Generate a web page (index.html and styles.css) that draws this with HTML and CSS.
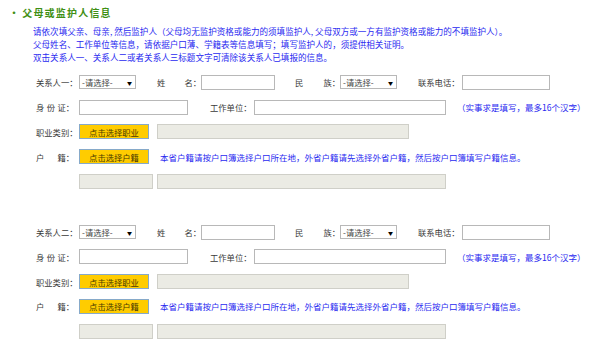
FILE: index.html
```html
<!DOCTYPE html>
<html lang="zh-CN">
<head>
    <meta charset="UTF-8">
    <title>父母或监护人信息</title>
    <link rel="stylesheet" href="styles.css">
</head>
<body>
    <div class="title"><span class="dot">·</span>父母或监护人信息</div>
    <div class="notes">
        <p>请依次填父亲、母亲, 然后监护人（父母均无监护资格或能力的须填监护人, 父母双方或一方有监护资格或能力的不填监护人）。</p>
        <p>父母姓名、工作单位等信息，请依据户口薄、学籍表等信息填写；填写监护人的，须提供相关证明。</p>
        <p>双击关系人一、关系人二或者关系人三标题文字可清除该关系人已填报的信息。</p>
    </div>

    <!-- 关系人一 -->
    <div class="group">
        <div class="row">
            <label class="lbl">关系人一：</label>
            <div class="select"><span>-请选择-</span><i>▼</i></div>
            <label class="lbl sp w-name"><span>姓</span><span>名：</span></label>
            <input type="text" class="inp w-74">
            <label class="lbl sp w-nation"><span>民</span><span>族：</span></label>
            <div class="select"><span>-请选择-</span><i>▼</i></div>
            <label class="lbl w-tel">联系电话：</label>
            <input type="text" class="inp w-88">
        </div>
        <div class="row">
            <label class="lbl sp w-id"><span>身</span><span>份</span><span>证：</span></label>
            <input type="text" class="inp w-109">
            <label class="lbl w-work">工作单位：</label>
            <input type="text" class="inp w-192">
            <span class="tip">（实事求是填写，最多16个汉字）</span>
        </div>
        <div class="row">
            <label class="lbl">职业类别：</label>
            <button class="pick">点击选择职业</button>
            <input type="text" class="inp gray w-252 ml-8" readonly>
        </div>
        <div class="row">
            <label class="lbl sp w-id"><span>户</span><span>籍：</span></label>
            <button class="pick">点击选择户籍</button>
            <span class="tip ml-11">本省户籍请按户口簿选择户口所在地，外省户籍请先选择外省户籍，然后按户口簿填写户籍信息。</span>
        </div>
        <div class="row indent">
            <input type="text" class="inp gray w-74" readonly>
            <input type="text" class="inp gray w-289" readonly>
        </div>
    </div>

    <!-- 关系人二 -->
    <div class="group">
        <div class="row">
            <label class="lbl">关系人二：</label>
            <div class="select"><span>-请选择-</span><i>▼</i></div>
            <label class="lbl sp w-name"><span>姓</span><span>名：</span></label>
            <input type="text" class="inp w-74">
            <label class="lbl sp w-nation"><span>民</span><span>族：</span></label>
            <div class="select"><span>-请选择-</span><i>▼</i></div>
            <label class="lbl w-tel">联系电话：</label>
            <input type="text" class="inp w-88">
        </div>
        <div class="row">
            <label class="lbl sp w-id"><span>身</span><span>份</span><span>证：</span></label>
            <input type="text" class="inp w-109">
            <label class="lbl w-work">工作单位：</label>
            <input type="text" class="inp w-192">
            <span class="tip">（实事求是填写，最多16个汉字）</span>
        </div>
        <div class="row">
            <label class="lbl">职业类别：</label>
            <button class="pick">点击选择职业</button>
            <input type="text" class="inp gray w-252 ml-8" readonly>
        </div>
        <div class="row">
            <label class="lbl sp w-id"><span>户</span><span>籍：</span></label>
            <button class="pick">点击选择户籍</button>
            <span class="tip ml-11">本省户籍请按户口簿选择户口所在地，外省户籍请先选择外省户籍，然后按户口簿填写户籍信息。</span>
        </div>
        <div class="row indent">
            <input type="text" class="inp gray w-74" readonly>
            <input type="text" class="inp gray w-289" readonly>
        </div>
    </div>
</body>
</html>
```

FILE: styles.css
```css
:root {
    --label-color: #3a3a3a;
    --note-color: #2a2af0;
    --title-color: #3f8f14;
    --border-color: #b8b8b8;
    --gray-fill: #ebebe4;
    --font-family: "Noto Sans CJK SC", "Noto Sans", sans-serif;
}

body {
    margin: 0;
    padding: 0;
    background: #fff;
    font-family: var(--font-family);
    color: var(--label-color);
}

.title {
    height: 14px;
    line-height: 14px;
    margin-top: 6px;
    padding-left: 9px;
    font-size: 10px;
    font-weight: bold;
    letter-spacing: 1.2px;
    color: var(--title-color);
}

.title .dot {
    margin-right: 2px;
}

.notes {
    margin-top: 5px;
    padding-left: 33px;
    font-size: 8.55px;
    line-height: 13px;
    color: var(--note-color);
}

.notes p {
    margin: 0;
    white-space: nowrap;
}

.group {
    margin-top: 6px;
    padding-left: 36px;
}

.group + .group {
    margin-top: 26px;
}

.row {
    display: flex;
    align-items: center;
    height: 24.75px;
    white-space: nowrap;
}

.row.indent {
    padding-left: 43px;
    gap: 4px;
}

.lbl {
    font-size: 8.3px;
    width: 43px;
    flex: none;
}

.lbl.sp {
    display: flex;
    justify-content: space-between;
    padding-right: 5px;
    box-sizing: border-box;
}

.lbl.w-name {
    width: 44px;
    margin-left: 21px;
    padding-right: 0;
}

.lbl.w-nation {
    width: 45px;
    margin-left: 20px;
    padding-right: 0;
}

.lbl.w-tel {
    width: 44px;
    margin-left: 21px;
}

.lbl.w-work {
    width: 44px;
    margin-left: 22px;
}

.select {
    flex: none;
    width: 57px;
    height: 14px;
    box-sizing: border-box;
    border: 1px solid var(--border-color);
    background: #fff;
    display: flex;
    align-items: center;
    justify-content: space-between;
    padding: 0 3px 0 2px;
    font-size: 8.3px;
    color: #444;
}

.select i {
    font-style: normal;
    font-size: 5px;
    color: #000;
}

.inp {
    flex: none;
    height: 15px;
    box-sizing: border-box;
    border: 1px solid var(--border-color);
    background: #fff;
    padding: 0;
    margin: 0;
    outline: none;
}

.inp.gray {
    background: var(--gray-fill);
    border-color: #cfcfc8;
}

.w-74 { width: 74px; }
.w-88 { width: 88px; }
.w-109 { width: 109px; }
.w-192 { width: 192px; }
.w-252 { width: 252px; }
.w-289 { width: 289px; }
.ml-8 { margin-left: 8px; }
.ml-11 { margin-left: 11px; }

.tip {
    margin-left: 11px;
    font-size: 8.5px;
    color: var(--note-color);
}

.pick {
    flex: none;
    width: 70px;
    height: 15px;
    box-sizing: border-box;
    margin: 0;
    padding: 0;
    border: 1px solid #86a9c9;
    background: #ffcc00;
    font-family: var(--font-family);
    font-size: 8.3px;
    color: #4a3a00;
    cursor: pointer;
}
```
